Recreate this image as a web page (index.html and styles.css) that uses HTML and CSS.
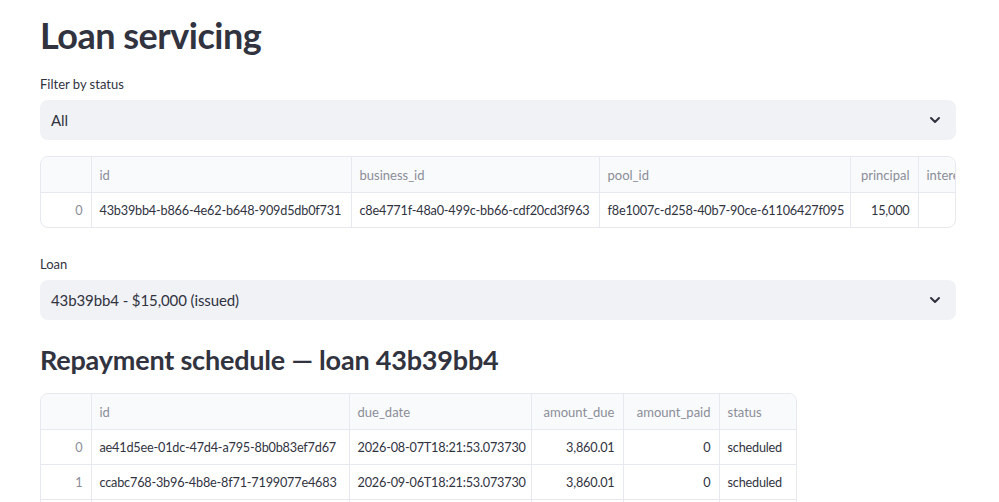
FILE: index.html
```html
<!DOCTYPE html>
<html lang="en">
<head>
    <meta charset="UTF-8">
    <meta name="viewport" content="width=device-width, initial-scale=1.0">
    <title>Loan servicing</title>
    <link rel="stylesheet" href="styles.css">
</head>
<body>
    <main class="page">
        <h1 class="title">Loan servicing</h1>

        <div class="field">
            <label class="field-label">Filter by status</label>
            <div class="select">
                <span>All</span>
                <svg class="chevron" viewBox="0 0 24 24" width="16" height="16"><path d="M6 9l6 6 6-6" fill="none" stroke="#31333f" stroke-width="3" stroke-linecap="round" stroke-linejoin="round"/></svg>
            </div>
        </div>

        <div class="frame frame-wide">
            <table class="grid">
                <colgroup>
                    <col style="width:50px"><col style="width:260px"><col style="width:248px"><col style="width:251px"><col style="width:68px"><col style="width:60px">
                </colgroup>
                <thead>
                    <tr><th></th><th>id</th><th>business_id</th><th>pool_id</th><th class="num">principal</th><th>interest_rate</th></tr>
                </thead>
                <tbody>
                    <tr><td class="idx">0</td><td>43b39bb4-b866-4e62-b648-909d5db0f731</td><td>c8e4771f-48a0-499c-bb66-cdf20cd3f963</td><td>f8e1007c-d258-40b7-90ce-61106427f095</td><td class="num">15,000</td><td></td></tr>
                </tbody>
            </table>
        </div>

        <div class="field loan-field">
            <label class="field-label">Loan</label>
            <div class="select">
                <span>43b39bb4 - $15,000 (issued)</span>
                <svg class="chevron" viewBox="0 0 24 24" width="16" height="16"><path d="M6 9l6 6 6-6" fill="none" stroke="#31333f" stroke-width="3" stroke-linecap="round" stroke-linejoin="round"/></svg>
            </div>
        </div>

        <h2 class="subtitle">Repayment schedule — loan 43b39bb4</h2>

        <div class="frame frame-narrow">
            <table class="grid">
                <colgroup>
                    <col style="width:50px"><col style="width:258px"><col style="width:182px"><col style="width:92px"><col style="width:96px"><col style="width:78px">
                </colgroup>
                <thead>
                    <tr><th></th><th>id</th><th>due_date</th><th class="num">amount_due</th><th class="num">amount_paid</th><th>status</th></tr>
                </thead>
                <tbody>
                    <tr><td class="idx">0</td><td>ae41d5ee-01dc-47d4-a795-8b0b83ef7d67</td><td>2026-08-07T18:21:53.073730</td><td class="num">3,860.01</td><td class="num">0</td><td>scheduled</td></tr>
                    <tr><td class="idx">1</td><td>ccabc768-3b96-4b8e-8f71-7199077e4683</td><td>2026-09-06T18:21:53.073730</td><td class="num">3,860.01</td><td class="num">0</td><td>scheduled</td></tr>
                    <tr><td class="idx">2</td><td>5d0e2a91-7c3f-4e18-9b42-1f6a8c0d3e75</td><td>2026-10-06T18:21:53.073730</td><td class="num">3,860.01</td><td class="num">0</td><td>scheduled</td></tr>
                </tbody>
            </table>
        </div>
    </main>
</body>
</html>
```

FILE: styles.css
```css
body {
    margin: 0;
    font-family: "Source Sans Pro", Lato, "Liberation Sans", sans-serif;
    color: #31333f;
    background: #fff;
    overflow: hidden;
}

.page {
    padding: 14px 43px 0 40px;
    display: flex;
    flex-direction: column;
}

.title {
    margin: 0;
    font-size: 36px;
    font-weight: 700;
    line-height: 43px;
    letter-spacing: -0.5px;
}

.field {
    margin-top: 18px;
    display: flex;
    flex-direction: column;
    gap: 7px;
}

.field-label {
    font-size: 13px;
    line-height: 18px;
}

.select {
    height: 40px;
    background: #f0f2f6;
    border-radius: 8px;
    display: flex;
    align-items: center;
    justify-content: space-between;
    padding: 0 13px 0 11px;
    font-size: 15px;
    letter-spacing: -0.1px;
}

.chevron {
    display: block;
}

.frame {
    margin-top: 16px;
    border: 1px solid #e6e9ef;
    border-radius: 8px;
    overflow: hidden;
}

.frame-wide {
    width: 914px;
}

.frame-narrow {
    width: 755px;
}

.grid {
    border-collapse: collapse;
    table-layout: fixed;
    width: 100%;
    font-size: 12.7px;
    letter-spacing: -0.2px;
}

.grid th,
.grid td {
    height: 34px;
    padding: 0 8px;
    text-align: left;
    white-space: nowrap;
    overflow: hidden;
    border-right: 1px solid #e6e9ef;
    border-bottom: 1px solid #e6e9ef;
}

.grid th {
    height: 35px;
    font-weight: 400;
    color: #8b8d98;
    background: #f9fafb;
    font-size: 13px;
    letter-spacing: 0;
}

.grid tr th:last-child,
.grid tr td:last-child {
    border-right: none;
}

.grid tbody tr:last-child td {
    border-bottom: none;
}

.grid .num {
    text-align: right;
}

.grid .idx {
    text-align: right;
    color: #8b8d98;
}

.loan-field {
    margin-top: 27px;
}

.subtitle {
    margin: 23px 0 0;
    font-size: 27px;
    line-height: 34px;
    font-weight: 700;
    letter-spacing: -0.2px;
}
```
